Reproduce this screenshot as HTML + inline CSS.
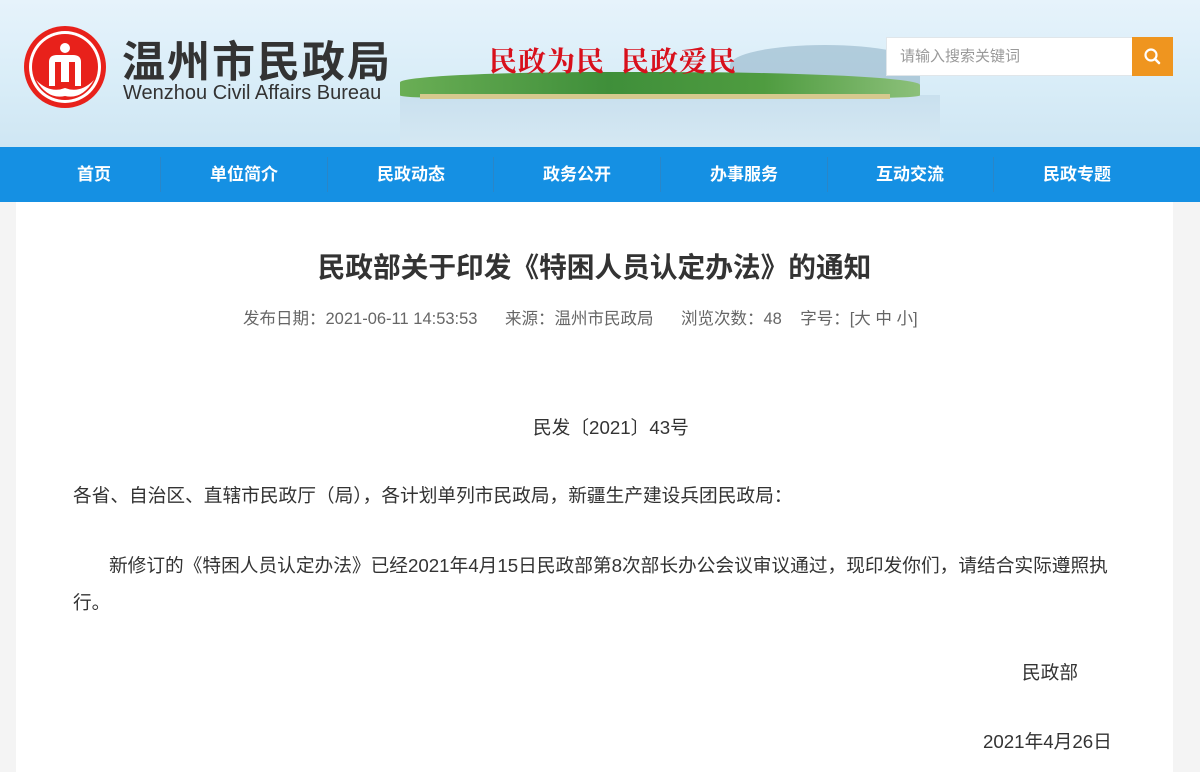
<!DOCTYPE html>
<html><head><meta charset="utf-8"><style>
*{margin:0;padding:0;box-sizing:border-box}
body{width:1200px;height:772px;overflow:hidden;background:#f4f4f4;font-family:"Liberation Sans","Noto Sans CJK SC",sans-serif;position:relative}
.hdr{position:absolute;left:0;top:0;width:1200px;height:147px;background:linear-gradient(180deg,#e6f3fb 0%,#d9edf8 55%,#cfe6f3 100%);overflow:hidden}
.abs{position:absolute}
.nav{position:absolute;left:0;top:147px;width:1200px;height:55px;background:#1590e3}
.nav span{position:absolute;top:0;line-height:55px;color:#fff;font-weight:bold;font-size:17px;transform:translateX(-50%)}
.nav i{position:absolute;top:10px;width:1px;height:35px;background:#2a86c8}
.main{position:absolute;left:16px;top:202px;width:1157px;height:570px;background:#fff}
.t{position:absolute;color:#333;font-size:18.7px;white-space:nowrap}
</style></head><body>
<div class="hdr">
  <div class="abs" style="left:400px;top:95px;width:540px;height:52px;background:linear-gradient(180deg,#c9e0ee,#d5e8f3)"></div>
  <div class="abs" style="left:730px;top:45px;width:190px;height:40px;border-radius:50% 50% 0 0;background:#93b4c8;opacity:.6"></div>
  <div class="abs" style="left:400px;top:72px;width:520px;height:26px;border-radius:40% 50% 10% 10%;background:linear-gradient(90deg,#6aae55,#3f8f3a 40%,#4f9c40 70%,#8cc07a);"></div>
  <div class="abs" style="left:420px;top:94px;width:470px;height:5px;background:#d6c98e"></div>
  <svg class="abs" style="left:22px;top:24px" width="86" height="86" viewBox="0 0 86 86">
    <circle cx="43" cy="43" r="41" fill="#e8211b"/><circle cx="43" cy="43" r="36" fill="#fff"/><circle cx="43" cy="43" r="33" fill="#e8211b"/>
    <circle cx="43" cy="24" r="5" fill="#fff"/>
    <path d="M27 62 V38 Q27 31 35 31 H51 Q59 31 59 38 V62 H53 V38 H47 V58 H39 V38 H33 V62Z" fill="#fff"/>
    <path d="M14 56 Q28 70 43 64 Q58 70 72 56 Q60 76 43 72 Q26 76 14 56Z" fill="#fff"/>
  </svg>
  <div class="abs" style="left:122px;top:34px;font-size:43px;font-weight:bold;color:#333;letter-spacing:2px;font-family:'Noto Sans CJK SC',sans-serif;line-height:50px">温州市民政局</div>
  <div class="abs" style="left:123px;top:82px;font-size:20px;color:#333;line-height:23px">Wenzhou Civil Affairs Bureau</div>
  <div class="abs" style="left:489px;top:42px;font-size:28px;color:#d8101c;font-weight:bold;font-family:'Noto Serif CJK SC',serif;line-height:36px;letter-spacing:1px">民政为民&nbsp;&nbsp;民政爱民</div>
  <div class="abs" style="left:886px;top:37px;width:247px;height:39px;background:#fff;border:1px solid #e0e6ea"></div>
  <div class="abs" style="left:900px;top:37px;line-height:39px;font-size:15px;color:#999">请输入搜索关键词</div>
  <div class="abs" style="left:1132px;top:37px;width:41px;height:39px;background:#ef951f"></div>
  <svg class="abs" style="left:1143px;top:47px" width="20" height="20" viewBox="0 0 20 20"><circle cx="8" cy="8" r="5.5" fill="none" stroke="#fff" stroke-width="2.2"/><path d="M12 12 L16 16" stroke="#fff" stroke-width="2.6" stroke-linecap="round"/></svg>
</div>
<div class="nav">
  <span style="left:94px">首页</span><i style="left:160px"></i>
  <span style="left:244px">单位简介</span><i style="left:327px"></i>
  <span style="left:411px">民政动态</span><i style="left:493px"></i>
  <span style="left:577px">政务公开</span><i style="left:660px"></i>
  <span style="left:744px">办事服务</span><i style="left:827px"></i>
  <span style="left:910px">互动交流</span><i style="left:993px"></i>
  <span style="left:1077px">民政专题</span>
</div>
<div class="main"></div>
<div class="t" style="left:0;width:1189px;text-align:center;top:250px;font-size:27.7px;font-weight:bold;color:#333;line-height:36px">民政部关于印发《特困人员认定办法》的通知</div>
<div class="t" style="left:243px;top:309px;font-size:16.5px;color:#666;line-height:20px">发布日期：2021-06-11 14:53:53&nbsp;&nbsp;&nbsp;&nbsp;&nbsp;&nbsp;来源：温州市民政局&nbsp;&nbsp;&nbsp;&nbsp;&nbsp;&nbsp;浏览次数：48&nbsp;&nbsp;&nbsp;&nbsp;字号：[大 中 小]</div>
<div class="t" style="left:533px;top:416px;line-height:24px">民发〔2021〕43号</div>
<div class="t" style="left:73px;top:484px;line-height:24px">各省、自治区、直辖市民政厅（局），各计划单列市民政局，新疆生产建设兵团民政局：</div>
<div class="t" style="left:109px;top:554px;line-height:24px">新修订的《特困人员认定办法》已经2021年4月15日民政部第8次部长办公会议审议通过，现印发你们，请结合实际遵照执</div>
<div class="t" style="left:73px;top:591px;line-height:24px">行。</div>
<div class="t" style="left:1022px;top:661px;line-height:24px">民政部</div>
<div class="t" style="left:983px;top:730px;line-height:24px">2021年4月26日</div>
</body></html>
